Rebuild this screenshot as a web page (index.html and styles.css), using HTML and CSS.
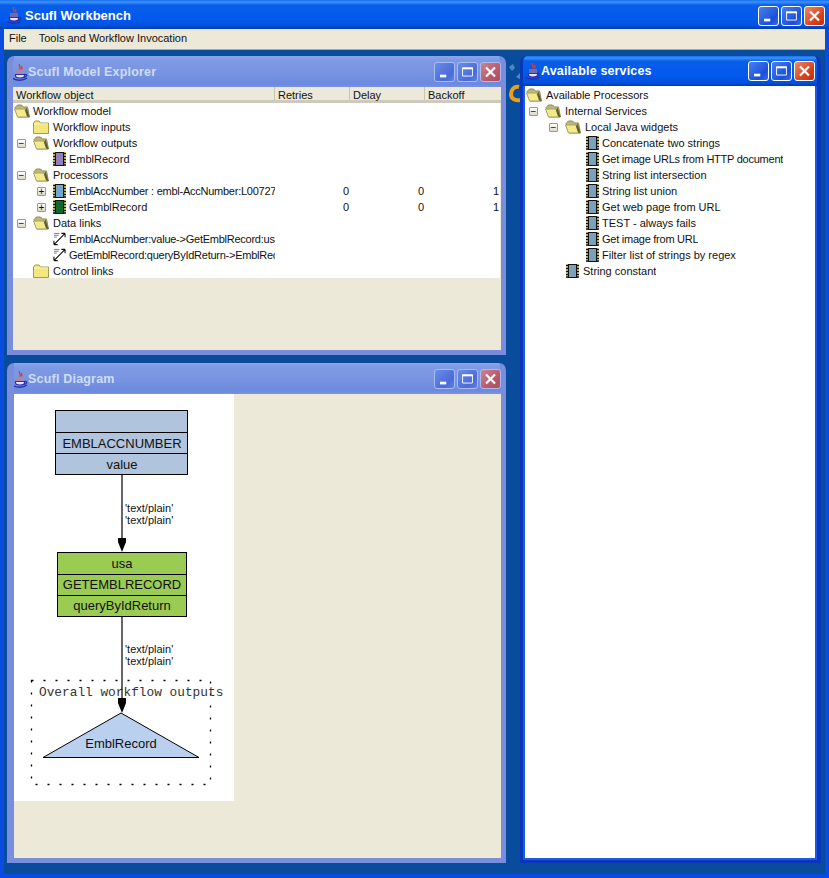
FILE: index.html
```html
<!DOCTYPE html>
<html lang="en">
<head>
  <meta charset="UTF-8" />
  <title>Scufl Workbench</title>
  <link rel="stylesheet" href="styles.css">
</head>
<body>

  <!-- shared icons -->
  <svg class="defs" width="0" height="0">
    <symbol id="cup" viewBox="0 0 16 17">
      <path d="M8 0c-2.500 2 2 3 -.5 5.500M10 2c-1.500 1.500 1 2 -.5 3.500" fill="none" stroke="#d8402c" stroke-width="1.300"/>
      <path d="M4 7h8M4 9h8" stroke="#d87c70" stroke-width="1"/>
      <path d="M3.500 10.500h9v1.500c0 1.500-2 2-4.500 2s-4.500-.5-4.500-2z" fill="#dfe4f8" stroke="#2a2fb0" stroke-width="1.200"/>
      <path d="M12.500 10.500c3-.5 3 2-.5 3M.5 14c3 3 11 3 14.500 0" fill="none" stroke="#2a2fb0" stroke-width="1.300"/>
    </symbol>
    <symbol id="folder-open" viewBox="0 0 16 14">
      <path d="M1 3.500l2.500-2.500h4l2 2h4l2 10H4z" fill="#bdb67a" stroke="#8d8a55"/>
      <path d="M.5 5h10.500l4 8H3.500z" fill="#f3ea8c" stroke="#a7a263"/>
      <path d="M12.500 3.500l3 9.500-2.500-.5-2-6z" fill="#5f5c30"/>
    </symbol>
    <symbol id="folder" viewBox="0 0 16 14">
      <path d="M.5 3l1.500-2h4l1.500 2h8v10.500H.5z" fill="#f3e880" stroke="#a39c56"/>
      <path d="M1 4h14" stroke="#fbf4b0"/>
    </symbol>
    <symbol id="chip" viewBox="0 0 13 14">
      <path d="M.5 0h2v14h-2zM10.500 0h2v14h-2z" fill="#e8d84a"/>
      <path d="M0 1.500h3M10 1.500h3M0 4.500h3M10 4.500h3M0 7.500h3M10 7.500h3M0 10.500h3M10 10.500h3M0 13h3M10 13h3" stroke="#111" stroke-width="1.400"/>
      <rect x="2.500" y=".5" width="8" height="13" fill="currentColor" stroke="#111"/>
    </symbol>
    <symbol id="link" viewBox="0 0 14 14">
      <path d="M1 1h6M1 3h5M1 5h3" stroke="#777"/>
      <path d="M1 13L13 1M13 1H9M13 1v4M1 13h4M1 13V9" fill="none" stroke="#111" stroke-width="1.200"/>
    </symbol>
    <symbol id="btn-min" viewBox="0 0 20 20"><rect x="5" y="13" width="7" height="3" fill="#fff"/></symbol>
    <symbol id="btn-max" viewBox="0 0 20 20"><path d="M4.500 5.500h11v9h-11z" fill="none" stroke="#fff"/><rect x="4" y="5" width="12" height="2" fill="#fff"/></symbol>
    <symbol id="btn-close" viewBox="0 0 20 20"><path d="M5 5l10 10M15 5L5 15" stroke="#fff" stroke-width="2.400"/></symbol>
  </svg>

  <div class="window">
    <div class="titlebar">
      <svg class="cup"><use href="#cup"/></svg>
      <span class="titlebar-text">Scufl Workbench</span>
      <div class="buttons">
        <span class="btn"><svg><use href="#btn-min"/></svg></span>
        <span class="btn"><svg><use href="#btn-max"/></svg></span>
        <span class="btn btn-red"><svg><use href="#btn-close"/></svg></span>
      </div>
    </div>

    <div class="menubar">
      <span>File</span>
      <span>Tools and Workflow Invocation</span>
    </div>

    <div class="desktop">
      <!-- bit of the wallpaper logo showing between the frames -->
      <svg class="wallpaper" width="14" height="44" viewBox="0 0 14 44">
        <path d="M2 6l4-3 2 4-3 3zM9 16l4-4v6z" fill="#4f86c8"/>
        <path d="M12 26c-5-1-8 3-8 7s3 7 9 6" fill="none" stroke="#e8a01c" stroke-width="4"/>
      </svg>

      <div class="frame frame-explorer">
        <div class="frame-title">
          <svg class="cup"><use href="#cup"/></svg>
          <span>Scufl Model Explorer</span>
          <div class="buttons">
            <span class="btn"><svg><use href="#btn-min"/></svg></span>
            <span class="btn"><svg><use href="#btn-max"/></svg></span>
            <span class="btn btn-red"><svg><use href="#btn-close"/></svg></span>
          </div>
        </div>
        <div class="frame-body">
          <div class="table-head">
            <div class="th th-name">Workflow object</div>
            <div class="th">Retries</div>
            <div class="th">Delay</div>
            <div class="th">Backoff</div>
          </div>
          <div class="tree tree-table">
            <div class="row d0"><span class="name"><svg class="ico"><use href="#folder-open"/></svg>Workflow model</span></div>
            <div class="row d1"><span class="name"><i class="exp"></i><svg class="ico"><use href="#folder"/></svg>Workflow inputs</span></div>
            <div class="row d1"><span class="name"><i class="exp">&minus;</i><svg class="ico"><use href="#folder-open"/></svg>Workflow outputs</span></div>
            <div class="row d2"><span class="name"><i class="exp"></i><svg class="chip purple"><use href="#chip"/></svg>EmblRecord</span></div>
            <div class="row d1"><span class="name"><i class="exp">&minus;</i><svg class="ico"><use href="#folder-open"/></svg>Processors</span></div>
            <div class="row d2"><span class="name tight"><i class="exp">+</i><svg class="chip blue"><use href="#chip"/></svg>EmblAccNumber : embl-AccNumber:L00727</span><span class="num">0</span><span class="num">0</span><span class="num">1</span></div>
            <div class="row d2"><span class="name"><i class="exp">+</i><svg class="chip green"><use href="#chip"/></svg>GetEmblRecord</span><span class="num">0</span><span class="num">0</span><span class="num">1</span></div>
            <div class="row d1"><span class="name"><i class="exp">&minus;</i><svg class="ico"><use href="#folder-open"/></svg>Data links</span></div>
            <div class="row d2"><span class="name tight"><i class="exp"></i><svg class="chip"><use href="#link"/></svg>EmblAccNumber:value-&gt;GetEmblRecord:usa</span></div>
            <div class="row d2"><span class="name tight"><i class="exp"></i><svg class="chip"><use href="#link"/></svg>GetEmblRecord:queryByIdReturn-&gt;EmblRecord</span></div>
            <div class="row d1"><span class="name"><i class="exp"></i><svg class="ico"><use href="#folder"/></svg>Control links</span></div>
          </div>
        </div>
      </div>

      <div class="frame frame-services">
        <div class="frame-title">
          <svg class="cup"><use href="#cup"/></svg>
          <span>Available services</span>
          <div class="buttons">
            <span class="btn"><svg><use href="#btn-min"/></svg></span>
            <span class="btn"><svg><use href="#btn-max"/></svg></span>
            <span class="btn btn-red"><svg><use href="#btn-close"/></svg></span>
          </div>
        </div>
        <div class="frame-body tree">
          <div class="row d0"><span class="name"><svg class="ico"><use href="#folder-open"/></svg>Available Processors</span></div>
          <div class="row d1"><span class="name"><i class="exp">&minus;</i><svg class="ico"><use href="#folder-open"/></svg>Internal Services</span></div>
          <div class="row d2"><span class="name"><i class="exp">&minus;</i><svg class="ico"><use href="#folder-open"/></svg>Local Java widgets</span></div>
          <div class="row d3"><span class="name"><i class="exp"></i><svg class="chip steel"><use href="#chip"/></svg>Concatenate two strings</span></div>
          <div class="row d3"><span class="name tight"><i class="exp"></i><svg class="chip steel"><use href="#chip"/></svg>Get image URLs from HTTP document</span></div>
          <div class="row d3"><span class="name"><i class="exp"></i><svg class="chip steel"><use href="#chip"/></svg>String list intersection</span></div>
          <div class="row d3"><span class="name"><i class="exp"></i><svg class="chip steel"><use href="#chip"/></svg>String list union</span></div>
          <div class="row d3"><span class="name"><i class="exp"></i><svg class="chip steel"><use href="#chip"/></svg>Get web page from URL</span></div>
          <div class="row d3"><span class="name"><i class="exp"></i><svg class="chip steel"><use href="#chip"/></svg>TEST - always fails</span></div>
          <div class="row d3"><span class="name tight"><i class="exp"></i><svg class="chip steel"><use href="#chip"/></svg>Get image from URL</span></div>
          <div class="row d3"><span class="name"><i class="exp"></i><svg class="chip steel"><use href="#chip"/></svg>Filter list of strings by regex</span></div>
          <div class="row d2 row-constant"><span class="name"><i class="exp"></i><svg class="chip steel"><use href="#chip"/></svg>String constant</span></div>
        </div>
      </div>

      <div class="frame frame-diagram">
        <div class="frame-title">
          <svg class="cup"><use href="#cup"/></svg>
          <span>Scufl Diagram</span>
          <div class="buttons">
            <span class="btn"><svg><use href="#btn-min"/></svg></span>
            <span class="btn"><svg><use href="#btn-max"/></svg></span>
            <span class="btn btn-red"><svg><use href="#btn-close"/></svg></span>
          </div>
        </div>
        <div class="frame-body">
          <svg class="diagram" width="220" height="407" viewBox="14 394 220 407">
            <!-- EmblAccNumber -->
            <rect x="55.500" y="410.500" width="132" height="64" fill="#b0c4de" stroke="#000"/>
            <path d="M55 432.500h132M55 453.500h132" stroke="#000"/>
            <text x="122" y="448" class="d-node">EMBLACCNUMBER</text>
            <text x="122" y="469" class="d-node">value</text>

            <path d="M122 474v66" stroke="#000" stroke-width="1.200"/>
            <path d="M118 538h8v4l-4 10-4-10z" fill="#000"/>
            <text x="125" y="512" class="d-label">'text/plain'</text>
            <text x="125" y="524" class="d-label">'text/plain'</text>

            <!-- GetEmblRecord -->
            <rect x="57.500" y="552.500" width="129" height="64" fill="#9acb52" stroke="#000"/>
            <path d="M57 574.500h129M57 595.500h129" stroke="#000"/>
            <text x="122" y="568" class="d-node">usa</text>
            <text x="122" y="589" class="d-node">GETEMBLRECORD</text>
            <text x="122" y="610" class="d-node">queryByIdReturn</text>

            <!-- outputs box -->
            <rect x="31.500" y="680.500" width="179" height="104" fill="none" stroke="#000" stroke-width="1.300" stroke-dasharray="2 10"/>
            <text x="39" y="696" class="d-mono">Overall workflow outputs</text>
            <path d="M121 713l78 44.500H43z" fill="#b9d0ee" stroke="#000"/>
            <text x="121" y="748" class="d-node">EmblRecord</text>

            <path d="M122 617v83" stroke="#000" stroke-width="1.200"/>
            <path d="M118 698h8v5l-4 10-4-10z" fill="#000"/>
            <text x="125" y="653" class="d-label">'text/plain'</text>
            <text x="125" y="665" class="d-label">'text/plain'</text>
          </svg>
        </div>
      </div>
    </div>
  </div>

</body>
</html>
```

FILE: styles.css
```css
* {
  box-sizing: border-box;
  margin: 0;
  padding: 0;
}

body {
  font-family: "Liberation Sans", Arial, sans-serif;
  font-size: 11px;
  color: #111;
  background-color: #0a4c9c;
  overflow: hidden;
}

.defs {
  display: block;
  position: absolute;
}

.window {
  width: 829px;
  height: 878px;
  display: flex;
  flex-direction: column;
  background: #0a4ce0;
}

/* MAIN TITLE */
.titlebar {
  height: 29px;
  flex: none;
  display: flex;
  align-items: center;
  padding: 2px 4px 0 6px;
  background: linear-gradient(#1a6ff0 0, #3a93f8 2px, #0a5ee8 5px, #0058ee 20px, #0050dc 26px, #003aa8 29px);
  color: #fff;
  font-weight: bold;
  font-size: 13px;
}

.titlebar-text {
  margin-left: 3px;
}

.cup {
  width: 16px;
  height: 17px;
  flex: none;
}

.buttons {
  margin-left: auto;
  display: flex;
  gap: 2px;
}

.btn {
  width: 21px;
  height: 20px;
  border: 1px solid #fff;
  border-radius: 3px;
  background: linear-gradient(135deg, #4a80f0, #1a50d8 70%, #3a6ae8);
}

.btn svg {
  display: block;
  width: 19px;
  height: 18px;
}

.btn-red {
  background: linear-gradient(135deg, #ee8a68, #d8401c 65%, #c03010);
}

/* MENU */
.menubar {
  height: 21px;
  flex: none;
  margin: 0 4px;
  display: flex;
  align-items: center;
  gap: 12px;
  padding: 0 0 3px 5px;
  background: #ece9d8;
  border-bottom: 1px solid #a8a89c;
}

.desktop {
  flex: 1;
  position: relative;
  margin: 0 4px 4px;
  padding: 6px 0 11px 3px;
  background: #0a4c9c;
  display: grid;
  grid-template-columns: 499px 301px;
  grid-template-rows: 299px 500px;
  column-gap: 14px;
  row-gap: 8px;
}

.wallpaper {
  position: absolute;
  left: 503px;
  top: 11px;
}

/* INTERNAL FRAMES */
.frame {
  display: flex;
  flex-direction: column;
  border-radius: 7px 7px 0 0;
  border: 5px solid #7a8cdc;
  border-top: 0;
  overflow: hidden;
  position: relative;
}

.frame-title {
  height: 31px;
  flex: none;
  margin: 0 -5px;
  display: flex;
  align-items: center;
  padding: 1px 5px 0 5px;
  background: linear-gradient(#8ea4e8 0, #7f9ae4 4px, #7a96e2 14px, #6c8ade 28px, #7a92e0 31px);
  color: #cfdcf8;
  font-weight: bold;
  font-size: 12.500px;
  letter-spacing: 0.2px;
}

.frame .btn {
  border-color: #a8bcf0;
  background: linear-gradient(135deg, #6a8ce8, #4a6cd8 70%, #6080e0);
}

.frame .btn-red {
  background: linear-gradient(135deg, #d08090, #b85868 65%, #a85060);
}

.frame-body {
  flex: 1;
  background: #ece9d8;
  min-height: 0;
}

.frame-explorer {
  grid-column: 1;
  grid-row: 1;
  border-left-width: 6px;
}

.frame-explorer .frame-title {
  margin-left: -6px;
}

.frame-diagram {
  grid-column: 1;
  grid-row: 2;
  border-left-width: 7px;
}

.frame-diagram .frame-title {
  margin-left: -7px;
}

.frame-services {
  grid-column: 2;
  grid-row: 1 / span 2;
  border-color: #0a36bc;
  border-width: 0 4px 3px 3px;
}

.frame-services .frame-title {
  height: 30px;
  margin: 0 -4px 0 -3px;
  padding: 0 6px 0 5px;
  background: linear-gradient(#1a6ff0 0, #3a93f8 2px, #0a5ee8 5px, #0058ee 20px, #0050dc 27px, #003aa8 30px);
  color: #fff;
  letter-spacing: 0.15px;
}

.frame-services .btn {
  border-color: #fff;
  background: linear-gradient(135deg, #4a80f0, #1a50d8 70%, #3a6ae8);
}

.frame-services .btn-red {
  background: linear-gradient(135deg, #ee8a68, #d8401c 65%, #c03010);
}

.frame-services .frame-body {
  background: #fff;
  padding-top: 1px;
  border: 2px solid #1a5ae8;
  border-top: 0;
}

/* TABLE + TREE */
.table-head {
  height: 16px;
  display: flex;
  background: #ece9d8;
  border-bottom: 3px solid #cdcabb;
}

.th {
  width: 75px;
  padding: 2px 0 0 3px;
  border-left: 1px solid #c8c5b6;
  line-height: 13px;
}

.th-name {
  width: 261px;
  padding-left: 3px;
  border-left: 0;
}

.tree-table {
  height: 175px;
  overflow: hidden;
  background: #fff;
  margin-right: 1px;
}

.row {
  height: 16px;
  display: flex;
  align-items: center;
  white-space: nowrap;
}

.name {
  width: 262px;
  display: flex;
  align-items: center;
  overflow: hidden;
  flex: none;
}

.frame-services .name {
  width: auto;
}

.tight {
  letter-spacing: -0.25px;
}

.d0 .name { padding-left: 1px; }
.d1 .name { padding-left: 4px; }
.d2 .name { padding-left: 24px; }
.d3 .name { padding-left: 44px; }

.frame-explorer .d0 .ico {
  margin-right: 3px;
}

.frame-explorer .chip {
  margin-right: 3px;
}

.frame-services .d3 .chip {
  margin-left: 1px;
  margin-right: 3px;
}

.row-constant .chip {
  margin-left: 1px;
}

.exp {
  width: 9px;
  height: 9px;
  flex: none;
  margin-right: 7px;
  font-style: normal;
  font-size: 10px;
  line-height: 7px;
  text-align: center;
  letter-spacing: 0;
  color: #111;
  border-radius: 1px;
  border: 1px solid #8a9ab0;
  background: linear-gradient(#fff, #dcd8c8);
}

.exp:empty {
  border: 0;
  background: none;
}

.ico {
  width: 16px;
  height: 14px;
  flex: none;
  margin-right: 4px;
}

.chip {
  width: 13px;
  height: 14px;
  flex: none;
  margin-right: 4px;
}

.purple { color: #9080c0; }
.blue { color: #70a8d0; }
.green { color: #0c6a2c; }
.steel { color: #7ca0b8; }

.num {
  width: 75px;
  flex: none;
  text-align: right;
  padding-right: 1px;
}

/* DIAGRAM */
.diagram {
  display: block;
  background: #fff;
}

.d-node {
  font-family: "Liberation Sans", Arial, sans-serif;
  font-size: 13px;
  text-anchor: middle;
  fill: #111;
}

.d-label {
  font-family: "Liberation Sans", Arial, sans-serif;
  font-size: 11px;
  fill: #111;
}

.d-mono {
  font-family: "Liberation Mono", monospace;
  font-size: 12.800px;
  fill: #333;
}
```
